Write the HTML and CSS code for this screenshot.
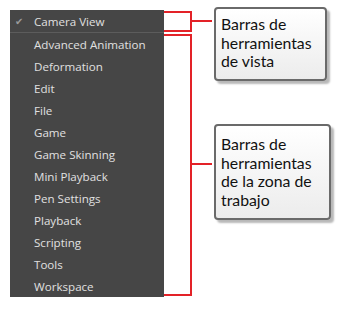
FILE: index.html
```html
<!DOCTYPE html>
<html>
<head>
  <link rel="stylesheet" href="styles.css">
</head>

<body>
  <div class="page">
    <ul class="menu">
      <li class="item checked"><span class="check">&#10004;</span>Camera View</li>
      <li class="separator"></li>
      <li class="item">Advanced Animation</li>
      <li class="item">Deformation</li>
      <li class="item">Edit</li>
      <li class="item">File</li>
      <li class="item">Game</li>
      <li class="item">Game Skinning</li>
      <li class="item">Mini Playback</li>
      <li class="item">Pen Settings</li>
      <li class="item">Playback</li>
      <li class="item">Scripting</li>
      <li class="item">Tools</li>
      <li class="item">Workspace</li>
    </ul>

    <div class="brackets">
      <div class="bracket bracket-view"></div>
      <div class="bracket bracket-work"></div>
    </div>

    <div class="notes">
      <div class="note note-view">Barras de<br>herramientas<br>de vista</div>
      <div class="note note-work">Barras de<br>herramientas<br>de la zona de<br>trabajo</div>
    </div>
  </div>
</body>
</html>
```

FILE: styles.css
```css
body {
  margin: 0;
  background: #fff;
}

.page {
  display: flex;
  align-items: flex-start;
  padding: 7px 0 0 10px;
}

.menu {
  list-style: none;
  margin: 3px 0 0 0;
  padding: 0;
  width: 154px;
  background: #464646;
  font-family: "Open Sans", sans-serif;
  font-size: 11.6px;
  color: #e0e0e0;
}

.item {
  display: flex;
  align-items: center;
  height: 22px;
  padding-left: 24px;
  white-space: nowrap;
}

.check {
  width: 0;
  margin-left: -19px;
  margin-right: 19px;
  font-size: 10px;
  color: #9a9a9a;
}

.separator {
  height: 1px;
  background: #5c5c5c;
}

.brackets {
  display: flex;
  flex-direction: column;
}

.bracket {
  position: relative;
  width: 26px;
  border: 2px solid #e32228;
  border-left: none;
}

.bracket::after {
  content: "";
  position: absolute;
  left: 100%;
  width: 22px;
  height: 2px;
  background: #e32228;
}

.bracket-view {
  margin-top: 4px;
  height: 17px;
}

.bracket-view::after {
  top: 7px;
}

.bracket-work {
  margin-top: 2px;
  height: 258px;
}

.bracket-work::after {
  top: 127px;
}

.notes {
  display: flex;
  flex-direction: column;
  margin-left: 22px;
}

.note {
  box-sizing: border-box;
  border: 2px solid #6a6a6a;
  border-radius: 4px;
  background: linear-gradient(#ffffff, #ececec);
  box-shadow: 3px 3px 2px rgba(0, 0, 0, 0.28);
  padding-left: 5px;
  font-family: Lato, sans-serif;
  font-size: 15.8px;
  line-height: 18.7px;
  color: #111;
}

.note-view {
  width: 113px;
  height: 74px;
  padding-top: 6px;
}

.note-work {
  width: 117px;
  height: 96px;
  margin-top: 43px;
  padding-top: 9px;
}
```
